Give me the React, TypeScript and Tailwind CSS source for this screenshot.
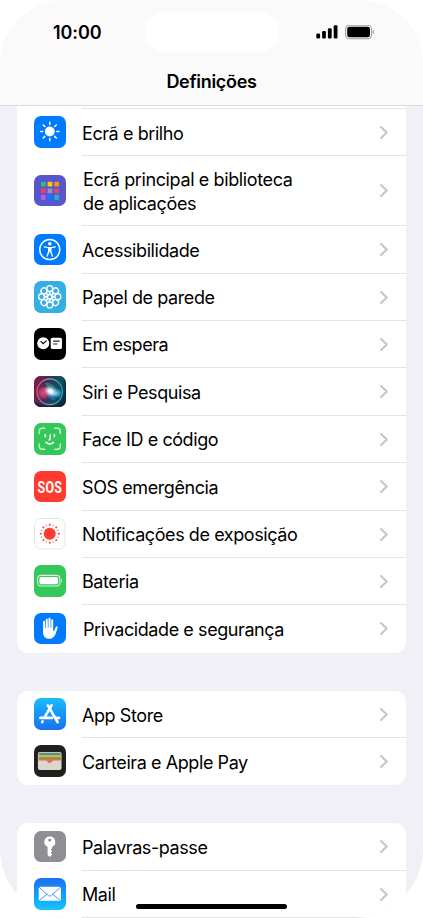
import type { ReactNode } from "react";
import clsx from "clsx";

type Item = {
  label: ReactNode;
  icon: ReactNode;
  bg: string;
  height: string;
  text?: string;
};

const petals = [0, 45, 90, 135, 180, 225, 270, 315];
const dots = Array.from({ length: 16 }, (_, i) => i * 22.5);

const appColors = [
  "#3cb878", "#ffcc00", "#ff9500",
  "#ea4458", "#9a8fb5", "#e0447c",
  "#b45ce6", "#0a7aff", "#19b9c4",
];

const BrightnessIcon = () => (
  <svg viewBox="0 0 32 32" className="size-full">
    <circle cx="16" cy="15.7" r="5" fill="#fff" />
    {petals.map((a) => (
      <path
        key={a}
        d="M16 8.6V6.3"
        stroke="#fff"
        strokeWidth="1.5"
        strokeLinecap="round"
        transform={`rotate(${a} 16 15.7)`}
      />
    ))}
  </svg>
);

const HomeScreenIcon = () => (
  <svg viewBox="0 0 32 32" className="size-full">
    {appColors.map((c, i) => (
      <rect
        key={c}
        x={7 + (i % 3) * 6.8}
        y={6.8 + Math.floor(i / 3) * 6.8}
        width="4.9"
        height="4.9"
        rx="0.8"
        fill={c}
      />
    ))}
  </svg>
);

const AccessibilityIcon = () => (
  <svg viewBox="0 0 32 32" className="size-full" fill="#fff">
    <circle cx="16" cy="15.8" r="10.2" fill="none" stroke="#fff" strokeWidth="1.5" />
    <circle cx="16" cy="10" r="1.8" />
    <path d="M10.5 12.4c-.8-.2-1 1-.2 1.2l3.9.9v3.2l-1.5 4.6c-.3 1 .9 1.3 1.2.4L15.8 18h.4l1.9 4.7c.3.9 1.5.6 1.2-.4l-1.5-4.6v-3.2l3.9-.9c.8-.2.6-1.4-.2-1.2l-3.9.7h-3.2z" />
  </svg>
);

const WallpaperIcon = () => (
  <svg viewBox="0 0 32 32" className="size-full" fill="none" stroke="#fff" strokeWidth="1.4">
    {petals.map((a) => (
      <g key={a} transform={`rotate(${a} 16 16)`}>
        <circle cx="16" cy="7.7" r="3" />
        <path d="M16 10.8v3.2" strokeWidth="1.8" />
      </g>
    ))}
    <circle cx="16" cy="16" r="2.3" />
  </svg>
);

const StandByIcon = () => (
  <svg viewBox="0 0 32 32" className="size-full">
    <circle cx="9.4" cy="15.6" r="6.1" fill="#fff" />
    <path d="M7 13.7l2.2 2.2 3.3-2.8" fill="none" stroke="#000" strokeWidth="1.1" strokeLinecap="round" />
    <rect x="17" y="9.8" width="11.4" height="11.6" rx="1.6" fill="#fff" />
    <path d="M19.5 13.3h6.6M19.5 16.2h4.3" stroke="#222" strokeWidth="1.1" />
  </svg>
);

const SiriIcon = () => (
  <svg viewBox="0 0 32 32" className="size-full">
    <defs>
      <linearGradient id="siriBg" x1="0" y1="0.3" x2="1" y2="0.6">
        <stop offset="0" stopColor="#861846" />
        <stop offset="0.45" stopColor="#30365c" />
        <stop offset="0.75" stopColor="#0b5263" />
        <stop offset="1" stopColor="#062e45" />
      </linearGradient>
      <radialGradient id="siriRed">
        <stop offset="0" stopColor="#f0447c" />
        <stop offset="0.6" stopColor="#c83a6e" stopOpacity="0.8" />
        <stop offset="1" stopColor="#a02a5c" stopOpacity="0" />
      </radialGradient>
      <radialGradient id="siriBlue">
        <stop offset="0" stopColor="#7cc8f2" />
        <stop offset="0.6" stopColor="#3090cc" stopOpacity="0.8" />
        <stop offset="1" stopColor="#1d6fae" stopOpacity="0" />
      </radialGradient>
      <radialGradient id="siriGlow">
        <stop offset="0" stopColor="#fff" />
        <stop offset="0.35" stopColor="#eef6ff" stopOpacity="0.95" />
        <stop offset="1" stopColor="#a8d0e8" stopOpacity="0" />
      </radialGradient>
      <linearGradient id="siriRing">
        <stop offset="0" stopColor="#e0557f" />
        <stop offset="0.5" stopColor="#7fa99c" />
        <stop offset="1" stopColor="#2e9fa5" />
      </linearGradient>
    </defs>
    <rect width="32" height="32" fill="url(#siriBg)" />
    <path d="M0 32V26c8 5 18 5 32 0v6z" fill="#101b38" opacity="0.6" />
    <ellipse cx="10" cy="17" rx="8" ry="7.5" fill="url(#siriRed)" />
    <ellipse cx="22.5" cy="17.5" rx="7.5" ry="5.5" fill="url(#siriBlue)" />
    <path d="M11 7c6-1 11 3 13 8-6 0-11-3-13-8z" fill="#48b594" opacity="0.45" />
    <path d="M13 17c6 0 9 4 9 7-6 1-9-3-9-7z" fill="#2e7fce" opacity="0.55" />
    <circle cx="16" cy="16" r="13" fill="none" stroke="url(#siriRing)" strokeWidth="1.2" />
    <ellipse cx="16.8" cy="15.6" rx="7.5" ry="5.5" fill="url(#siriGlow)" transform="rotate(30 16.8 15.6)" />
  </svg>
);

const FaceIdIcon = () => (
  <svg viewBox="0 0 32 32" className="size-full" fill="none" stroke="#fff" strokeLinecap="round">
    <path
      d="M5.3 10.8V8.3a3 3 0 0 1 3-3h2.5M21.2 5.3h2.5a3 3 0 0 1 3 3v2.5M26.7 21.2v2.5a3 3 0 0 1-3 3h-2.5M10.8 26.7H8.3a3 3 0 0 1-3-3v-2.5"
      strokeWidth="1.4"
      opacity="0.75"
    />
    <path d="M11.5 12v1.8M20.7 12v1.8" strokeWidth="1.7" />
    <path d="M16.4 12v4.2c0 .8-.4 1.1-1.2 1.1" strokeWidth="1.4" />
    <path d="M12.3 19.7c2 2 5.4 2 7.4 0" strokeWidth="1.7" />
  </svg>
);

const SosIcon = () => (
  <div className="flex size-full items-center justify-center pt-px">
    <span className="scale-x-[0.73] font-['Roboto'] text-[17px] leading-none font-bold tracking-[0.3px] text-white">
      SOS
    </span>
  </div>
);

const ExposureIcon = () => (
  <svg viewBox="0 0 32 32" className="size-full">
    <rect x="0.5" y="0.5" width="31" height="31" rx="6.8" fill="#fff" stroke="#e5e5e7" />
    <circle cx="16" cy="16" r="6.1" fill="#ff3b30" />
    {dots.map((a, i) => (
      <circle
        key={a}
        cx="16"
        cy={i % 2 ? 7 : 6.8}
        r={i % 2 ? 0.6 : 1}
        fill="#ff3b30"
        transform={`rotate(${a} 16 16)`}
      />
    ))}
  </svg>
);

const BatteryIcon = () => (
  <svg viewBox="0 0 32 32" className="size-full">
    <rect x="3.7" y="10.5" width="22.6" height="10.8" rx="3.2" fill="none" stroke="#d8f5df" strokeWidth="1.1" />
    <rect x="5.5" y="12.3" width="19" height="7.2" rx="1.6" fill="#fff" />
    <path d="M27.7 14v3.8c1.2-.4 1.2-3.4 0-3.8z" fill="#d8f5df" />
  </svg>
);

const HandIcon = () => (
  <svg viewBox="0 0 32 32" className="size-full" fill="#fff">
    <path d="M9.2 19.5V9.3c0-1.8 2-1.8 2 0v6h.7V7.2c0-1.8 2.1-1.8 2.1 0v7.6h.7V6.1c0-1.7 2.1-1.7 2.1 0v8.7h.7V7.5c0-1.7 2-1.7 2 0v10.8l.8.2 1.7-4.1c.6-1.5 2.5-.9 2 .7-.7 2.1-1.3 4.2-2.1 6.2-1.2 3.1-3.2 4.9-6.2 4.9-4 0-6.5-2.4-6.5-6.7z" />
  </svg>
);

const AppStoreIcon = () => (
  <svg viewBox="0 0 32 32" className="size-full" stroke="#fff" strokeLinecap="round" fill="none">
    <path d="M14.1 7.5L24 24.5M17.8 7.5L10.6 20" strokeWidth="2.7" />
    <path d="M6.5 20.2h11.8M23.1 20.2h2.4" strokeWidth="2.6" />
    <path d="M8.8 23.7l-.6 1" strokeWidth="2.5" />
  </svg>
);

const WalletIcon = () => (
  <svg viewBox="0 0 32 32" className="size-full">
    <rect x="4" y="7" width="24" height="18.3" rx="2" fill="#dad7cc" />
    <path d="M4.8 9.5c0-1 .7-1.7 1.7-1.7h19c1 0 1.7.7 1.7 1.7V11H4.8z" fill="#548f9f" />
    <path d="M4.8 10.2h22.4v2.4H4.8z" fill="#d1b82b" />
    <path d="M4.8 12.4h22.4v2.5H4.8z" fill="#789451" />
    <path d="M4.8 14.4h22.4v1.3h-6.4c-1.5 0-2 .5-2.7 1.5-1 1.5-3.2 1.5-4.2 0-.7-1-1.2-1.5-2.7-1.5H4.8z" fill="#eb6b58" />
  </svg>
);

const KeyIcon = () => (
  <svg viewBox="0 0 32 32" className="size-full">
    <path
      fillRule="evenodd"
      fill="#fff"
      d="M16 5.5a5.6 5.6 0 0 0-2.2 10.7v8.2l2.2 2.1 2.5-2.6-1.6-1.7 1.6-1.7-1.4-1.7 1.2-1.1v-1.5A5.6 5.6 0 0 0 16 5.5zm0 2a1.6 1.6 0 1 1 0 3.2 1.6 1.6 0 0 1 0-3.2z"
    />
  </svg>
);

const MailIcon = () => (
  <svg viewBox="0 0 32 32" className="size-full">
    <rect x="4.8" y="8.8" width="22.6" height="14.4" rx="1.7" fill="#fff" />
    <path
      d="M5.3 9.5l9.2 8.2c.9.8 2.3.8 3.2 0l9.2-8.2M5.5 22.6l7.7-6.1M26.7 22.6L19 16.5"
      fill="none"
      stroke="#268df2"
      strokeWidth="0.9"
    />
  </svg>
);

const general: Item[] = [
  { label: "Ecrã e brilho", icon: <BrightnessIcon />, bg: "bg-[#007aff]", height: "h-[47px]", text: "pt-[3px]" },
  {
    label: (
      <>
        Ecrã principal e biblioteca
        <br />
        de aplicações
      </>
    ),
    icon: <HomeScreenIcon />,
    bg: "bg-[#5756ce]",
    height: "h-[70px]",
    text: "pl-px pt-[3px] tracking-[-0.38px]",
  },
  { label: "Acessibilidade", icon: <AccessibilityIcon />, bg: "bg-[#007aff]", height: "h-[48px]" },
  { label: "Papel de parede", icon: <WallpaperIcon />, bg: "bg-[#35ade5]", height: "h-[47px]" },
  { label: "Em espera", icon: <StandByIcon />, bg: "bg-black", height: "h-[47px]" },
  { label: "Siri e Pesquisa", icon: <SiriIcon />, bg: "bg-[#1b2444]", height: "h-[48px]" },
  { label: "Face ID e código", icon: <FaceIdIcon />, bg: "bg-[#34c759]", height: "h-[47px]" },
  { label: "SOS emergência", icon: <SosIcon />, bg: "bg-[#ff3b30]", height: "h-[48px]" },
  { label: "Notificações de exposição", icon: <ExposureIcon />, bg: "bg-white", height: "h-[47px]" },
  { label: "Bateria", icon: <BatteryIcon />, bg: "bg-[#34c759]", height: "h-[47px]" },
  { label: "Privacidade e segurança", icon: <HandIcon />, bg: "bg-[#007aff]", height: "h-[48px]", text: "pl-px pt-0.5" },
];

const store: Item[] = [
  { label: "App Store", icon: <AppStoreIcon />, bg: "bg-linear-to-b from-[#1cbcfb] to-[#1d6ff0]", height: "h-[47px]", text: "pt-[3px]" },
  { label: "Carteira e Apple Pay", icon: <WalletIcon />, bg: "bg-[#20201f]", height: "h-[47px]", text: "pt-[3px]" },
];

const accounts: Item[] = [
  { label: "Palavras-passe", icon: <KeyIcon />, bg: "bg-[#8e8e93]", height: "h-[48px]" },
  { label: "Mail", icon: <MailIcon />, bg: "bg-linear-to-b from-[#1d6ff2] to-[#1ac4fb]", height: "h-[47px]" },
];

function Row({ item, last }: { item: Item; last: boolean }) {
  return (
    <div className={clsx("flex pl-[17px] tracking-[-0.42px]", item.height)}>
      <div className="flex items-center pb-px">
        <div className={clsx("size-[31.5px] overflow-hidden rounded-[7px]", item.bg)}>{item.icon}</div>
      </div>
      <div
        className={clsx(
          "ml-[16.5px] flex flex-1 items-center justify-between border-b pr-[17px]",
          last ? "border-transparent" : "border-[#e4e4e6]",
        )}
      >
        <span className={clsx("text-[18px] leading-6 whitespace-nowrap", item.text ?? "pt-0.5")}>
          {item.label}
        </span>
        <svg width="10" height="15" viewBox="0 0 10 15" fill="none">
          <path d="M2 2l5.8 5.5L2 13" stroke="#c4c4c7" strokeWidth="2" strokeLinecap="round" strokeLinejoin="round" />
        </svg>
      </div>
    </div>
  );
}

function Group({ items, open }: { items: Item[]; open?: boolean }) {
  return items.map((item, i) => <Row key={i} item={item} last={!open && i === items.length - 1} />);
}

export default function App() {
  return (
    <div className="h-[918px] w-[423px] overflow-hidden bg-white">
      <div className="relative flex h-full flex-col overflow-hidden rounded-t-[65px] rounded-b-[69px] bg-[#f1f0f6] font-['Inter',sans-serif] text-black">
        <header className="h-[106px] shrink-0 border-b border-[#d9d9dd] bg-[#fafafa]">
          <div className="flex h-[52px] items-end">
            <div className="w-[145px] pb-[7px] pl-[53px] text-[18px] leading-6 font-semibold tracking-[-0.1px]">10:00</div>
            <div className="h-10 w-[134px] rounded-full bg-white" />
            <div className="flex h-10 items-center gap-[7px] pl-[37px]">
              <svg width="22" height="15" viewBox="0 0 22 15">
                <rect x="0.3" y="8.6" width="3.8" height="5" rx="1.1" />
                <rect x="6.1" y="6.1" width="3.8" height="7.5" rx="1.1" />
                <rect x="11.9" y="3.2" width="3.8" height="10.4" rx="1.1" />
                <rect x="17.7" y="0.3" width="3.8" height="13.3" rx="1.1" />
              </svg>
              <svg width="30" height="15" viewBox="0 0 30 15">
                <rect x="0.6" y="0.2" width="26" height="13.6" rx="4" fill="none" stroke="#a0a0a0" strokeWidth="1.1" />
                <rect x="2.2" y="1.8" width="22.8" height="10.4" rx="2.2" />
                <path d="M27.9 4.8v4.4c1.5-.6 1.5-3.8 0-4.4z" fill="#a0a0a0" />
              </svg>
            </div>
          </div>
          <h1 className="mt-[18px] text-center text-[18px] leading-6 font-semibold tracking-[-0.3px]">Definições</h1>
        </header>

        <main className="px-[17px]">
          <section className="rounded-b-[11px] bg-white">
            <div className="ml-[65px] h-[3px] border-b border-[#e4e4e6]" />
            <Group items={general} />
          </section>
          <section className="mt-[38px] rounded-[11px] bg-white">
            <Group items={store} />
          </section>
          <section className="mt-[38px] rounded-t-[11px] bg-white">
            <Group items={accounts} open />
          </section>
        </main>

        <div className="absolute bottom-[9px] left-[136px] h-[5px] w-[151px] rounded-full bg-black" />
      </div>
    </div>
  );
}
